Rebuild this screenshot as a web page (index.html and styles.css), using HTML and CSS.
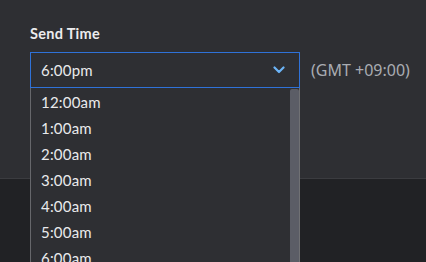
FILE: index.html
```html
<!DOCTYPE html>
<html>
<head>
    <title>Send Time</title>
    <link rel="stylesheet" href="styles.css">
</head>
<body>
    <div class="painel">
        <label class="rotulo">Send Time</label>

        <div class="linha">
            <div class="campo">
                <div class="select">
                    <span>6:00pm</span>
                    <svg class="seta" width="12" height="8" viewBox="0 0 12 8">
                        <path d="M1.5 1.5 L6 6 L10.5 1.5" fill="none" stroke="#6cb4f7" stroke-width="2.2" stroke-linecap="round" stroke-linejoin="round"/>
                    </svg>
                </div>

                <div class="lista">
                    <ul id="listaHoras"></ul>
                    <div class="trilho"><div class="barra"></div></div>
                </div>
            </div>

            <span class="fuso">(GMT +09:00)</span>
        </div>
    </div>

    <div class="rodape"></div>

    <script>
        const horas = ['12:00am', '1:00am', '2:00am', '3:00am', '4:00am', '5:00am', '6:00am'];
        const listaHoras = document.getElementById('listaHoras');

        horas.forEach((hora) => {
            const item = document.createElement('li');
            item.textContent = hora;
            listaHoras.appendChild(item);
        });
    </script>
</body>
</html>
```

FILE: styles.css
```css
html, body {
    height: 262px;
}

body {
    margin: 0;
    background: #212225;
    font-family: Lato, "Noto Sans", sans-serif;
    color: #e9eaec;
    overflow: hidden;
}

.painel {
    background: #2e2f33;
    height: 179px;
    border-bottom: 1px solid #3b3c40;
    padding: 25px 0 0 30px;
    box-sizing: border-box;
}

.rotulo {
    display: block;
    font-weight: bold;
    font-size: 14.5px;
    line-height: 18px;
    color: #ececee;
    letter-spacing: 0.3px;
}

.linha {
    display: flex;
    align-items: center;
    margin-top: 9px;
}

.campo {
    position: relative;
    width: 270px;
}

.select {
    display: flex;
    align-items: center;
    justify-content: space-between;
    height: 36px;
    box-sizing: border-box;
    border: 1px solid #2f72d8;
    padding: 0 14px 0 10px;
    font-size: 15px;
    letter-spacing: 0.2px;
}

.seta {
    display: block;
}

.lista {
    position: absolute;
    top: 36px;
    left: 0;
    width: 270px;
    height: 174px;
    display: flex;
    overflow: hidden;
    background: #2e2f33;
    border-left: 1px solid #66676b;
    border-right: 1px solid #707174;
    box-sizing: border-box;
}

#listaHoras {
    list-style: none;
    margin: 0;
    padding: 1px 0 0 10px;
    flex: 1;
}

#listaHoras li {
    line-height: 26px;
    font-size: 15px;
    letter-spacing: 0.2px;
}

.trilho {
    width: 9px;
    padding-top: 1px;
}

.barra {
    height: 200px;
    background: #5b5d66;
    border-radius: 2px 2px 0 0;
}

.fuso {
    margin-left: 11px;
    font-family: "Noto Sans", sans-serif;
    font-size: 16px;
    color: #a9acb2;
}

.rodape {
    height: 83px;
}
```
